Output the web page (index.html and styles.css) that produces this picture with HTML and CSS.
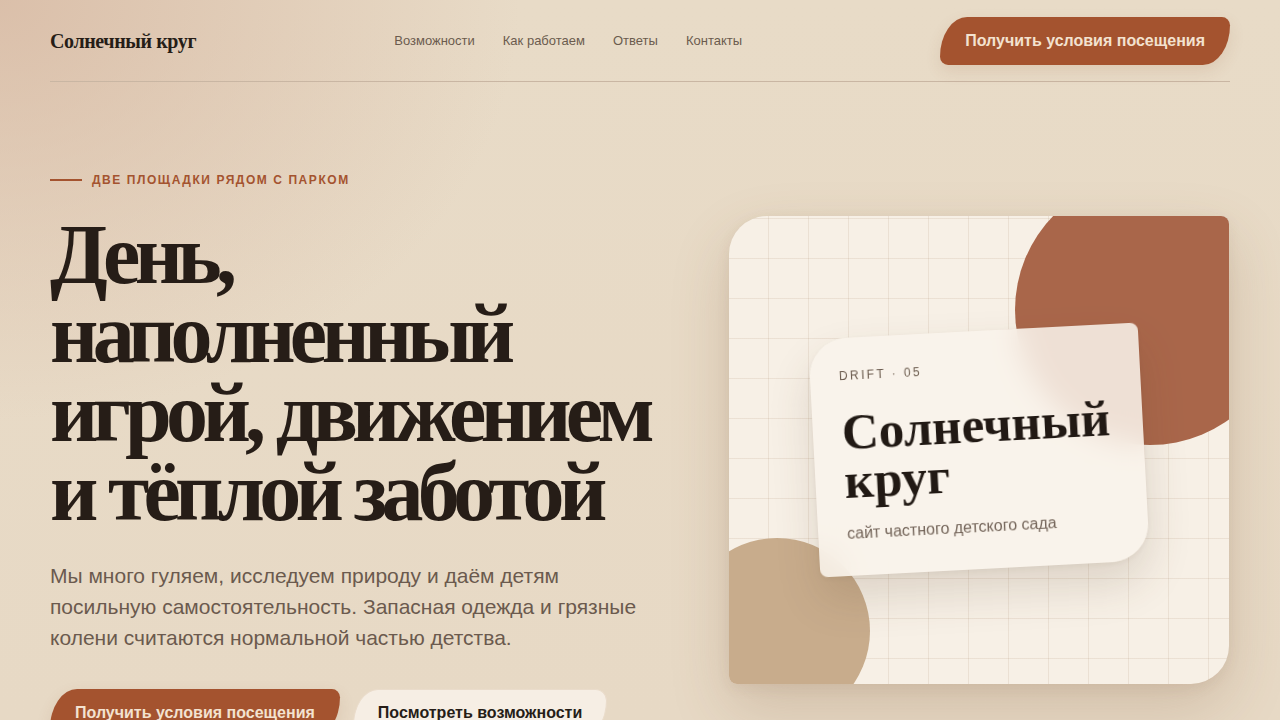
FILE: index.html
```html
<!DOCTYPE html>
<html lang="ru">
<head>
<meta charset="utf-8">
<title>Солнечный круг</title>
<link rel="stylesheet" href="styles.css">
</head>
<body>
<div class="page">
  <header class="header">
    <a class="logo" href="#">Солнечный круг</a>
    <nav class="nav">
      <a href="#">Возможности</a>
      <a href="#">Как работаем</a>
      <a href="#">Ответы</a>
      <a href="#">Контакты</a>
    </nav>
    <a class="btn btn-primary" href="#">Получить условия посещения</a>
  </header>

  <section class="hero">
    <div class="hero-text">
      <p class="eyebrow"><span class="eyebrow-line"></span>Две площадки рядом с парком</p>
      <h1 class="title">День, наполненный игрой, движением и тёплой заботой</h1>
      <p class="lead">Мы много гуляем, исследуем природу и даём детям посильную самостоятельность. Запасная одежда и грязные колени считаются нормальной частью детства.</p>
      <div class="actions">
        <a class="btn btn-primary" href="#">Получить условия посещения</a>
        <a class="btn btn-secondary" href="#">Посмотреть возможности</a>
      </div>
    </div>

    <div class="visual">
      <div class="circle circle-big"></div>
      <div class="circle circle-small"></div>
      <div class="note">
        <span class="note-tag">DRIFT · 05</span>
        <p class="note-title">Солнечный круг</p>
        <p class="note-sub">сайт частного детского сада</p>
      </div>
    </div>
  </section>
</div>
</body>
</html>
```

FILE: styles.css
```css
* { box-sizing: border-box; }

html, body {
  margin: 0;
  height: 100%;
}

body {
  background:
    radial-gradient(ellipse 520px 420px at 0 0, rgba(214, 182, 160, 0.75), rgba(214, 182, 160, 0) 100%),
    linear-gradient(180deg, #e8dbc7 0%, #e7d9c5 100%);
  color: #261d17;
  font-family: "Liberation Sans", Arial, sans-serif;
  overflow: hidden;
}

a { text-decoration: none; color: inherit; }

.page {
  padding: 0 50px 0 50px;
}

.header {
  display: flex;
  align-items: center;
  justify-content: space-between;
  padding: 17px 0 16px;
  border-bottom: 1px solid #c9b6a3;
}

.logo {
  font-family: "Liberation Serif", "Times New Roman", serif;
  font-weight: 700;
  font-size: 20px;
  letter-spacing: -0.02em;
  color: #261d17;
}

.nav {
  display: flex;
  gap: 28px;
  font-size: 13px;
  color: #6b5b4e;
  margin-top: -2px;
}

.btn {
  display: inline-flex;
  align-items: center;
  justify-content: center;
  height: 48px;
  padding: 0 25px;
  font-size: 16px;
  font-weight: 700;
  border-radius: 30px 9px 30px 9px / 44px 9px 44px 9px;
}

.btn-primary {
  background: #a4532f;
  color: #f3e2d0;
  box-shadow: 0 6px 16px rgba(140, 70, 40, 0.12);
}

.btn-secondary {
  background: #f6eee4;
  color: #261d17;
  border: 1px solid #eadccb;
  padding: 0 24px;
  border-radius: 30px 14px 30px 9px / 44px 14px 44px 9px;
}

.hero {
  display: grid;
  grid-template-columns: 1fr 500px;
  gap: 40px;
  padding-top: 90px;
  padding-right: 1px;
  align-items: start;
}

.eyebrow {
  display: flex;
  align-items: center;
  gap: 10px;
  margin: 0;
  height: 16px;
  font-size: 12px;
  font-weight: 700;
  letter-spacing: 0.13em;
  text-transform: uppercase;
  color: #a4532f;
}

.eyebrow-line {
  width: 32px;
  height: 2px;
  background: #a4532f;
}

.title {
  margin: 27px 0 0;
  font-family: "Liberation Serif", "Times New Roman", serif;
  font-weight: 700;
  font-size: 84px;
  line-height: 79px;
  letter-spacing: -0.068em;
  color: #261d17;
  max-width: 620px;
}

.lead {
  margin: 29px 0 0;
  font-size: 21px;
  line-height: 31px;
  color: #6b5a4e;
  max-width: 598px;
}

.actions {
  display: flex;
  gap: 13px;
  margin-top: 36px;
}

.visual {
  position: relative;
  margin-top: 44px;
  height: 468px;
  border-radius: 38px 8px 38px 8px;
  overflow: hidden;
  background-color: #f7f0e6;
  background-image:
    linear-gradient(90deg, rgba(176, 146, 116, 0.16) 1px, transparent 1px),
    linear-gradient(180deg, rgba(176, 146, 116, 0.16) 1px, transparent 1px);
  background-size: 40px 40px;
  background-position: -1px 2px;
  box-shadow: 0 24px 60px rgba(120, 82, 50, 0.2), 0 4px 14px rgba(120, 82, 50, 0.08);
}

.circle {
  position: absolute;
  border-radius: 50%;
  filter: blur(0.6px);
}

.circle-big {
  width: 270px;
  height: 270px;
  left: 286px;
  top: -41px;
  background: #a9664a;
}

.circle-small {
  width: 186px;
  height: 186px;
  left: -45px;
  top: 322px;
  background: #c8ac8c;
}

.note {
  position: absolute;
  left: 85px;
  top: 115px;
  width: 330px;
  height: 238px;
  padding: 30px 30px 0 29px;
  transform: rotate(-3deg);
  border-radius: 38px 8px 38px 8px;
  background: rgba(249, 243, 235, 0.86);
  backdrop-filter: blur(14px);
  -webkit-backdrop-filter: blur(14px);
  box-shadow: 0 22px 44px rgba(90, 60, 35, 0.16), 0 2px 6px rgba(90, 60, 35, 0.06);
}

.note-tag {
  display: block;
  height: 16px;
  line-height: 16px;
  font-size: 12px;
  letter-spacing: 0.2em;
  color: #6b5b4e;
}

.note-title {
  margin: 24px 0 0;
  font-family: "Liberation Serif", "Times New Roman", serif;
  font-weight: 700;
  font-size: 51px;
  line-height: 49px;
  color: #211914;
}

.note-sub {
  margin: 18px 0 0;
  font-size: 16px;
  line-height: 20px;
  color: #74655a;
}
```
